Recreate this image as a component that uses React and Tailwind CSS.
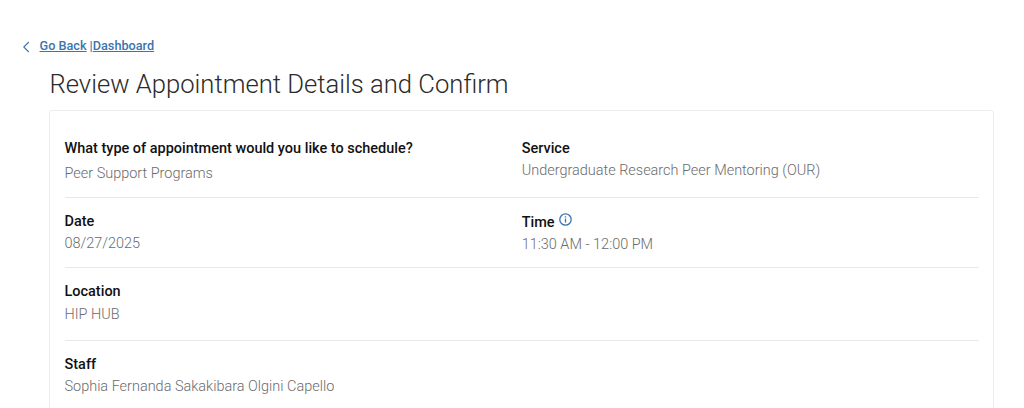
const L = ({ children }) => <div className="text-[14.48px] leading-[22px] font-medium text-[#111]">{children}</div>;
const V = ({ children }) => <div className="text-[14.46px] leading-[22px] font-light text-[#6b6b6b]">{children}</div>;
export default function App() {
  return (
    <main className="h-[408px] overflow-hidden bg-white pt-[35px] font-['Roboto',sans-serif]">
      <nav className="flex h-[22px] items-center pl-[22px] text-[12.7px] font-medium text-[#3a75ae]">
        <svg className="mr-[9.5px] mt-[2px] h-[12px] w-[8px]" viewBox="0 0 8 12" fill="none" stroke="currentColor" strokeWidth="1.1"><path d="M6.8 1 1.8 6l5 5" /></svg>
        <a href="#back" className="underline">Go Back</a>
        <span className="ml-[3px]">|</span>
        <a href="#dashboard" className="underline">Dashboard</a>
      </nav>
      <h1 className="ml-[49.5px] mt-[9px] h-[44px] text-[25.64px] leading-[36px] font-light text-[#2b2b2b]">Review Appointment Details and Confirm</h1>
      <section className="ml-[49px] h-[330px] w-[945px] rounded-[3px] border border-[#ededed] pr-[14px] pl-[14.5px]">
        <div className="grid h-[87px] grid-cols-2 border-b border-[#e8e8e8] pt-[27px]">
          <div className="flex flex-col gap-[3px]"><L>What type of appointment would you like to schedule?</L><V>Peer Support Programs</V></div>
          <div><L>Service</L><V>Undergraduate Research Peer Mentoring (OUR)</V></div>
        </div>
        <div className="grid h-[70px] grid-cols-2 border-b border-[#e8e8e8] pt-[13px]">
          <div><L>Date</L><V>08/27/2025</V></div>
          <div className="pt-px"><div className="flex"><L>Time</L><svg className="ml-[4.5px] mt-px h-[13px] w-[13px] text-[#3a75ae]" viewBox="0 0 13 13" fill="none" stroke="currentColor"><circle cx="6.5" cy="6.5" r="5.7" strokeWidth="1.3" /><path d="M6.5 5.6v4M6.5 3.2v1.3" strokeWidth="1.3" /></svg></div><V>11:30 AM - 12:00 PM</V></div>
        </div>
        <div className="flex h-[73px] flex-col gap-px border-b border-[#e8e8e8] pt-[13px]"><L>Location</L><V>HIP HUB</V></div>
        <div className="pt-[13px]"><L>Staff</L><V>Sophia Fernanda Sakakibara Olgini Capello</V></div>
      </section>
    </main>
  );
}
